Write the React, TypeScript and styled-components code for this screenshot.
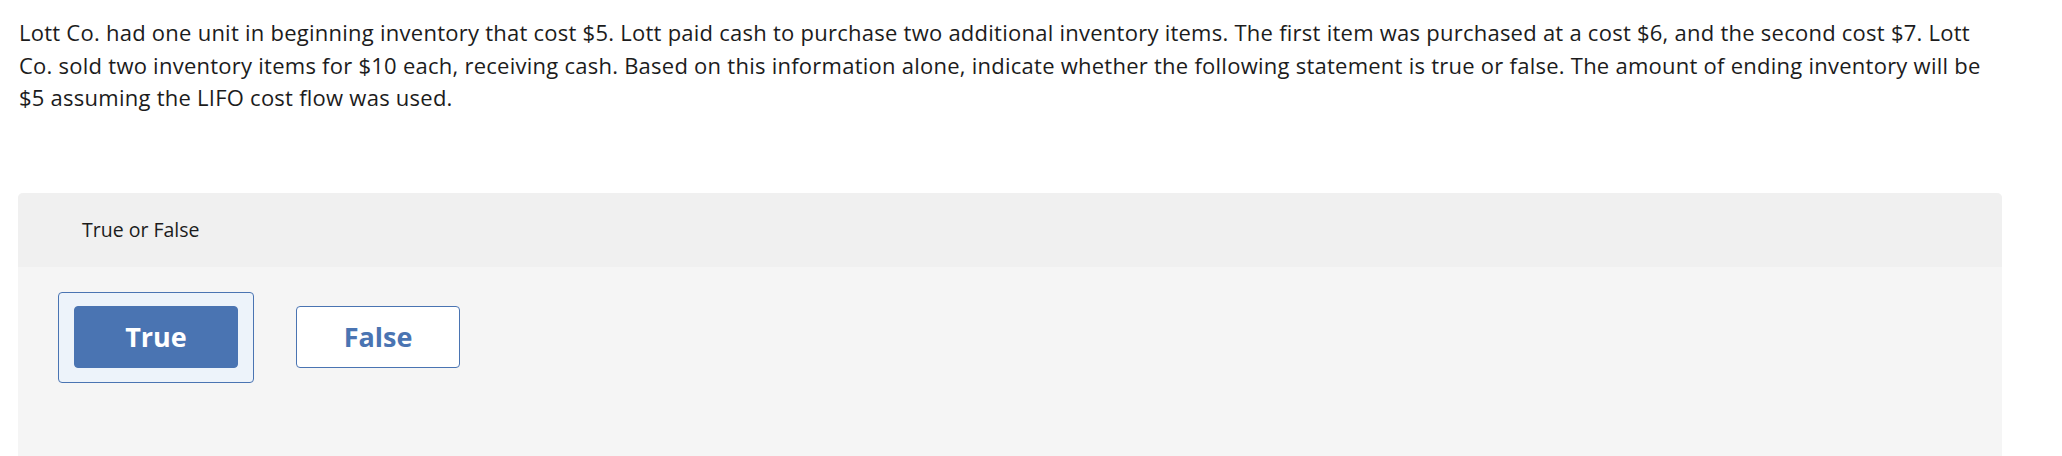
import styled, { createGlobalStyle } from "styled-components";

const GlobalStyle = createGlobalStyle`
  body {
    margin: 0;
    background: #ffffff;
    font-family: "Open Sans", Lato, "Liberation Sans", sans-serif;
    color: #1c1c1c;
  }
`;

const Page = styled.div`
  padding: 16px 60px 0 18px;
`;

const Prompt = styled.p`
  margin: 0 0 0 1px;
  width: 1975px;
  font-size: 22px;
  letter-spacing: 0.25px;
  line-height: 32.5px;
  color: #1c1c1c;
`;

const Panel = styled.section`
  margin-top: 79px;
  width: 1984px;
  border-radius: 5px;
  overflow: hidden;
  background: #f5f5f5;
`;

const PanelHeader = styled.div`
  height: 74px;
  display: flex;
  align-items: center;
  padding-left: 64px;
  background: #f0f0f0;
  font-size: 19.5px;
  color: #1c1c1c;
`;

const Options = styled.div`
  display: flex;
  gap: 26px;
  padding: 25px 40px 120px;
`;

const Choice = styled.div<{ $selected?: boolean }>`
  padding: 13px 15px 14px;
  border: 1px solid ${(p) => (p.$selected ? "#4a74b2" : "transparent")};
  border-radius: 4px;
  background: ${(p) => (p.$selected ? "#edf3fa" : "transparent")};
`;

const ChoiceButton = styled.button<{ $selected?: boolean }>`
  width: 164px;
  height: 62px;
  border: 1px solid #4a74b2;
  border-radius: 4px;
  background: ${(p) => (p.$selected ? "#4a74b2" : "#ffffff")};
  color: ${(p) => (p.$selected ? "#ffffff" : "#4a74b2")};
  font-family: "Open Sans", Lato, "Liberation Sans", sans-serif;
  font-weight: 700;
  font-size: 27px;
  cursor: pointer;
`;

const options = [
  { label: "True", selected: true },
  { label: "False", selected: false },
];

export default function App() {
  return (
    <>
      <GlobalStyle />
      <Page>
        <Prompt>
          Lott Co. had one unit in beginning inventory that cost $5. Lott paid
          cash to purchase two additional inventory items. The first item was
          purchased at a cost $6, and the second cost $7. Lott Co. sold two
          inventory items for $10 each, receiving cash. Based on this
          information alone, indicate whether the following statement is true
          or false. The amount of ending inventory will be $5 assuming the LIFO
          cost flow was used.
        </Prompt>
        <Panel>
          <PanelHeader>True or False</PanelHeader>
          <Options>
            {options.map((o) => (
              <Choice key={o.label} $selected={o.selected}>
                <ChoiceButton $selected={o.selected}>{o.label}</ChoiceButton>
              </Choice>
            ))}
          </Options>
        </Panel>
      </Page>
    </>
  );
}
